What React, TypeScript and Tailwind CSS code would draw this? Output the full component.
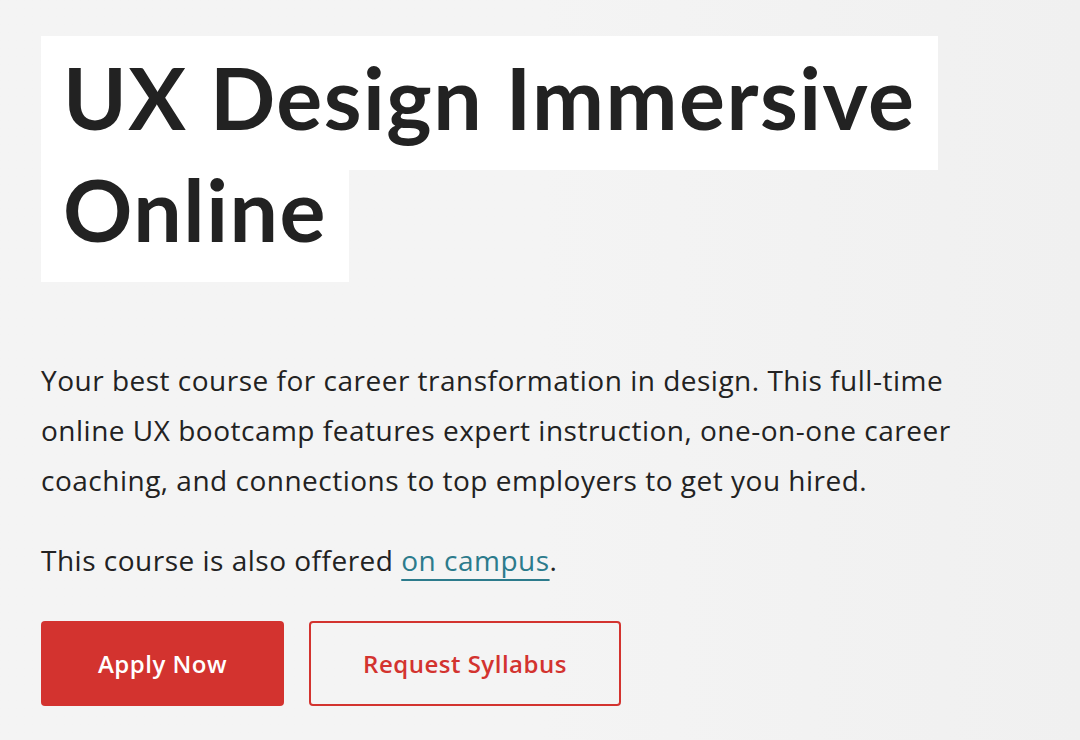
import React from 'react';

const App: React.FC = () => {
  return (
    <div
      className="min-h-screen w-full bg-gradient-to-r from-[#f4f4f4] via-[#f4f4f4] to-[#f0f0f0] pl-[41px] pt-[41px] text-[#222222]"
      style={{ fontFamily: '"Open Sans", "Noto Sans", sans-serif' }}
    >
      <h1
        className="m-0 w-[920px] text-[86px] font-bold leading-[112px] tracking-[1.5px]"
        style={{ fontFamily: 'Lato, "Noto Sans", sans-serif' }}
      >
        <span className="bg-white box-decoration-clone pl-[22px] pr-[22px] pt-[9px] pb-[22px]">
          UX Design Immersive Online
        </span>
      </h1>

      <p className="mt-[90px] text-[28px] leading-[50px] tracking-[0.5px]">
        Your best course for career transformation in design. This full-time
        <br />
        online UX bootcamp features expert instruction, one-on-one career
        <br />
        coaching, and connections to top employers to get you hired.
      </p>

      <p className="mt-[30px] text-[28px] leading-[50px] tracking-[0.5px]">
        This course is also offered{' '}
        <a
          href="#"
          className="text-[#2c7b8c] underline decoration-[#2c7b8c] decoration-2 underline-offset-[8px]"
        >
          on campus
        </a>
        .
      </p>

      <div className="mt-[36px] flex gap-[25px]">
        <button className="flex h-[85px] w-[243px] items-center justify-center rounded-[4px] bg-[#d3332f] text-[24px] font-semibold tracking-[0.5px] text-white">
          Apply Now
        </button>
        <button className="flex h-[85px] w-[312px] items-center justify-center rounded-[4px] border-2 border-[#d3332f] text-[24px] font-semibold tracking-[0.5px] text-[#d3332f]">
          Request Syllabus
        </button>
      </div>
    </div>
  );
};

export default App;
